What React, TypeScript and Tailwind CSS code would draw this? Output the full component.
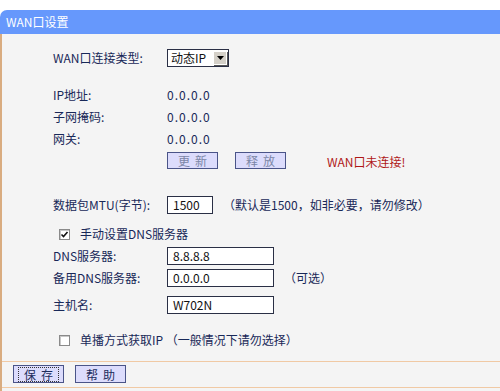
import React from 'react';

const font = "font-['SimSun','Noto_Sans_CJK_SC',sans-serif]";

function Check({ on }: { on?: boolean }) {
  return (
    <span className="inline-flex h-[11px] w-[11px] items-center justify-center border border-[#8a8a8a] bg-white shadow-[inset_1px_1px_0_#c8c8c8]">
      {on && (
        <svg width="9" height="9" viewBox="0 0 9 9">
          <path d="M1.5 4.5 L3.5 6.5 L7.5 2" stroke="#111" strokeWidth="1.6" fill="none" />
        </svg>
      )}
    </span>
  );
}

function Box({ value, w }: { value: string; w: string }) {
  return (
    <div className={`${w} h-[18px] border border-[#2a2f45] bg-white pl-[5px] leading-[16px] text-[#111]`}>{value}</div>
  );
}

function Btn({ label, dim, focus, h = 'h-[17px]' }: { label: string; dim?: boolean; focus?: boolean; h?: string }) {
  return (
    <div
      className={`flex ${h} w-[51px] items-center justify-center border border-[#4a5488] bg-[#dcdcfc] ${
        dim ? 'text-[#7b86a6]' : 'text-[#1c2c5c]'
      }`}
    >
      <span className={`tracking-[5px] pl-[5px] leading-[13px] ${focus ? 'outline outline-1 outline-dotted outline-[#333]' : ''}`}>
        {label}
      </span>
    </div>
  );
}

function Row({ label, children, h = 'h-[22px]' }: { label: string; children: React.ReactNode; h?: string }) {
  return (
    <div className={`flex items-center ${h}`}>
      <div className="w-[114px] shrink-0">{label}</div>
      {children}
    </div>
  );
}

export default function App() {
  return (
    <div className={`h-[391px] w-[500px] bg-white pt-[10px] text-[12px] text-[#182858] ${font}`}>
      <div className="h-[24px] rounded-tl-[7px] bg-[#6698fc] pl-[6px] leading-[24px] text-white">WAN口设置</div>
      <div className="h-[357px] border-l-2 border-[#d9ac80] bg-[#f4f4f4]">
        <div className="pl-[51px] pt-[14px]">
          <Row label="WAN口连接类型:" h="h-[20px]">
            <div className="flex h-[18px] w-[62px] items-center border border-[#2a2f45] bg-white pl-[3px] text-[#111]">
              <span className="flex-1">动态IP</span>
              <span className="mr-[1px] flex h-[14px] w-[14px] items-center justify-center border border-[#fff] bg-[#d4d0c8] shadow-[1px_1px_0_#555]">
                <svg width="7" height="4" viewBox="0 0 7 4">
                  <path d="M0 0 H7 L3.5 4 Z" fill="#000" />
                </svg>
              </span>
            </div>
          </Row>
          <div className="mt-[16px]">
            <Row label="IP地址:">
              <span className="tracking-[1px]">0.0.0.0</span>
            </Row>
            <Row label="子网掩码:">
              <span className="tracking-[1px]">0.0.0.0</span>
            </Row>
            <Row label="网关:">
              <span className="tracking-[1px]">0.0.0.0</span>
            </Row>
            <Row label="" h="h-[20px]">
              <div className="flex items-center">
                <Btn label="更新" dim />
                <div className="ml-[17px]">
                  <Btn label="释放" dim />
                </div>
                <span className="ml-[41px] mt-[4px] text-[#b01818]">WAN口未连接!</span>
              </div>
            </Row>
          </div>
          <div className="mt-[25px]">
            <Row label="数据包MTU(字节):" h="h-[20px]">
              <Box value="1500" w="w-[46px]" />
              <span className="ml-[10px]">（默认是1500，如非必要，请勿修改）</span>
            </Row>
          </div>
          <div className="mt-[9px] flex h-[20px] items-center pl-[6px]">
            <Check on />
            <span className="ml-[10px]">手动设置DNS服务器</span>
          </div>
          <div className="mt-[2px]">
            <Row label="DNS服务器:" h="h-[20px]">
              <Box value="8.8.8.8" w="w-[107px]" />
            </Row>
          </div>
          <div className="mt-[2px]">
            <Row label="备用DNS服务器:" h="h-[20px]">
              <Box value="0.0.0.0" w="w-[107px]" />
              <span className="ml-[10px]">（可选）</span>
            </Row>
          </div>
          <div className="mt-[7px]">
            <Row label="主机名:" h="h-[20px]">
              <Box value="W702N" w="w-[107px]" />
            </Row>
          </div>
          <div className="mt-[14px] flex h-[22px] items-center pl-[6px]">
            <Check />
            <span className="ml-[10px]">单播方式获取IP （一般情况下请勿选择）</span>
          </div>
        </div>
        <div className="mt-[10px] border-t border-[#f0c9a4]" />
        <div className="flex items-center gap-[11px] pl-[11px] pt-[3px]">
          <Btn label="保存" focus h="h-[18px]" />
          <Btn label="帮助" h="h-[18px]" />
        </div>
        <div className="mt-[4px] border-t border-[#f0c9a4]" />
      </div>
    </div>
  );
}
